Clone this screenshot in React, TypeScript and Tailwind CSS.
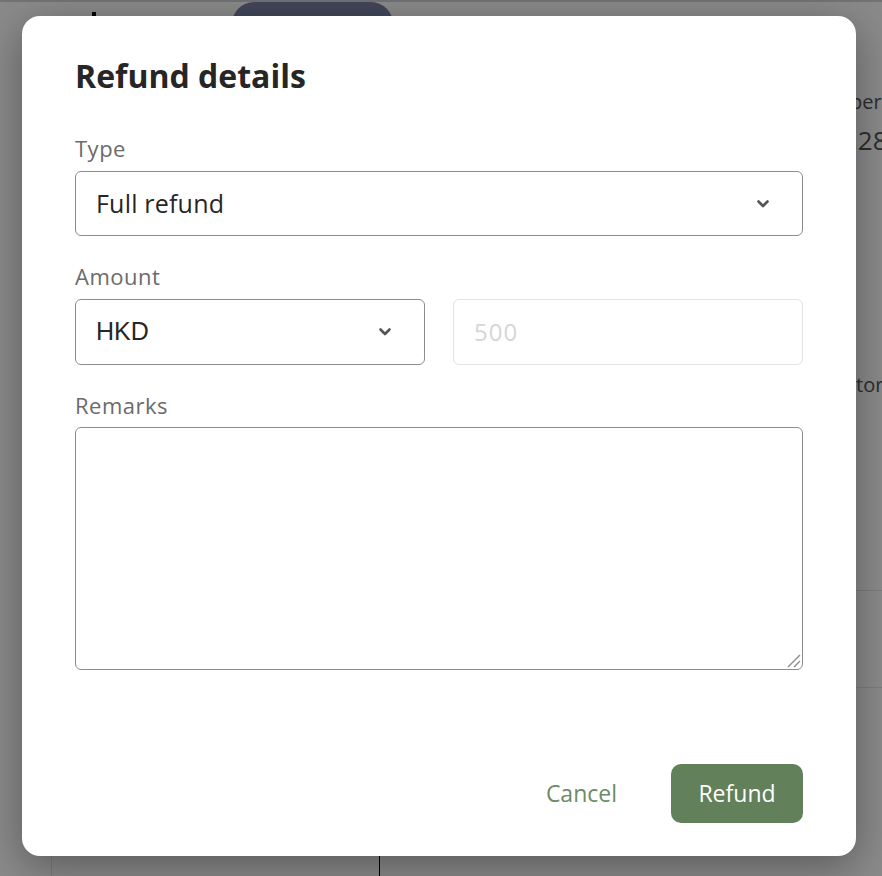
import React from "react";

function Chevron() {
  return (
    <svg width="14" height="10" viewBox="0 0 14 10" className="shrink-0">
      <path d="M2.5 2.5 L7 7 L11.5 2.5" fill="none" stroke="#555" strokeWidth="2.6" strokeLinecap="round" strokeLinejoin="round" />
    </svg>
  );
}

export default function App() {
  const font = { fontFamily: "'Open Sans', 'Noto Sans', sans-serif" };
  return (
    <div className="relative w-full h-[876px] overflow-hidden bg-white" style={font}>
      {/* underlying page */}
      <div className="flex flex-col h-full border-t-2 border-gray-300">
        <div className="flex items-start h-[60px] pl-[92px]">
          <div className="w-[4px] h-[4px] bg-black mt-[10px]" />
          <div className="ml-[136px] w-[161px] h-[44px] rounded-full bg-[#7a82a5]" />
        </div>
        <div className="flex-1 flex">
          <div className="flex-1" />
          <div className="w-[40px] flex flex-col text-[#555] overflow-hidden">
            <div className="mt-[30px] text-[20px] leading-none whitespace-nowrap ml-[8px]">per</div>
            <div className="mt-[15px] text-[26px] leading-none whitespace-nowrap ml-[9px]">.28</div>
            <div className="mt-[222px] text-[20px] leading-none whitespace-nowrap ml-[14px]">tor</div>
            <div className="mt-[195px] border-t border-gray-200" />
            <div className="mt-[96px] border-t border-gray-200" />
          </div>
        </div>
        <div className="h-[20px] flex pl-[51px]">
          <div className="w-[329px] border-l border-gray-200 border-r border-r-black" />
        </div>
      </div>

      {/* overlay */}
      <div className="absolute inset-0 bg-black/[0.46]" />

      {/* modal */}
      <div className="absolute left-[22px] top-[16px] w-[834px] h-[840px] bg-white rounded-[18px] shadow-[0_10px_40px_rgba(0,0,0,0.35)] flex flex-col px-[53px] pt-[40px] pb-[33px]">
        <h2 className="text-[32px] font-bold text-[#262626] leading-[40px]">Refund details</h2>

        <div className="mt-[38px] text-[22px] text-[#6b6b6b] leading-[28px] tracking-[0.5px]">Type</div>
        <div className="mt-[9px] h-[65px] border border-[#8c8c8c] rounded-[6px] flex items-center pl-[20px] pr-[32px]">
          <span className="flex-1 text-[25px] text-[#262626] tracking-[0.2px]">Full refund</span>
          <Chevron />
        </div>

        <div className="mt-[26px] text-[22px] text-[#6b6b6b] leading-[28px] tracking-[0.5px]">Amount</div>
        <div className="mt-[9px] grid grid-cols-2 gap-[28px]">
          <div className="h-[66px] border border-[#8c8c8c] rounded-[6px] flex items-center pl-[20px] pr-[32px]">
            <span className="flex-1 text-[25px] text-[#262626]" style={{ fontFamily: "'Liberation Sans', Arial, sans-serif" }}>HKD</span>
            <Chevron />
          </div>
          <div className="h-[66px] border border-[#e3e3e3] rounded-[6px] flex items-center pl-[20px]">
            <span className="text-[24px] text-[#d6d6d6] tracking-[1px]">500</span>
          </div>
        </div>

        <div className="mt-[26px] text-[22px] text-[#6b6b6b] leading-[28px] tracking-[0.5px]">Remarks</div>
        <div className="mt-[8px] relative h-[243px] border border-[#8c8c8c] rounded-[6px]">
          <svg className="absolute right-[1px] bottom-[1px]" width="16" height="16" viewBox="0 0 16 16">
            <path d="M15 3 L3 15 M15 9 L9 15" stroke="#8c8c8c" strokeWidth="1.4" fill="none" />
          </svg>
        </div>

        <div className="flex-1" />
        <div className="flex justify-end items-center gap-[54px]">
          <button className="text-[23px] text-[#6a8c67]">Cancel</button>
          <button className="w-[132px] h-[59px] rounded-[10px] bg-[#62805a] text-white text-[23px]">Refund</button>
        </div>
      </div>
    </div>
  );
}
